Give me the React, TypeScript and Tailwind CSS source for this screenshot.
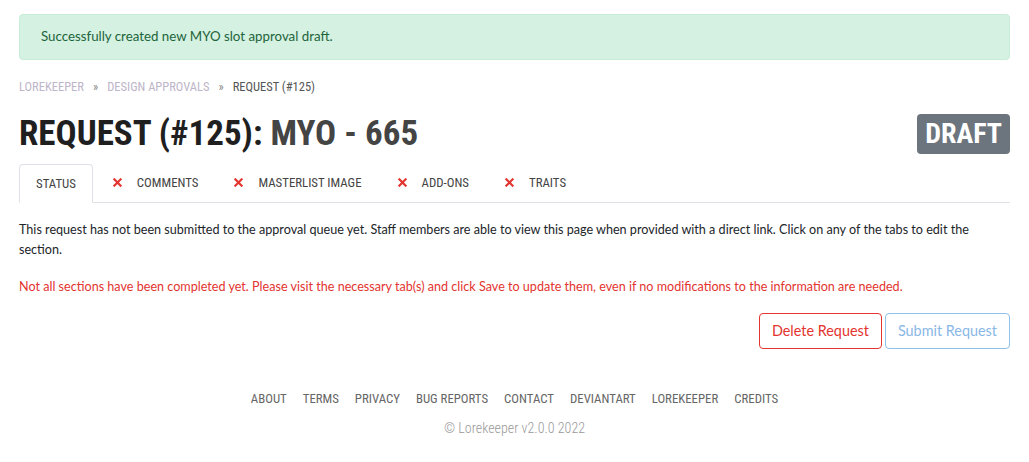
const heading = { fontFamily: '"Roboto Condensed", Roboto, sans-serif' }
const body = { fontFamily: 'Lato, "Open Sans", sans-serif' }

const tabs = ['Comments', 'Masterlist Image', 'Add-Ons', 'Traits']
const footerLinks = ['About', 'Terms', 'Privacy', 'Bug Reports', 'Contact', 'deviantART', 'Lorekeeper', 'Credits']

function CrossIcon() {
  return (
    <svg className="w-[9px] h-[9px] ml-[4px] mr-[15px]" viewBox="0 0 10 10" fill="none">
      <path d="M1.5 1.5l7 7M8.5 1.5l-7 7" stroke="#e3342f" strokeWidth="2.4" strokeLinecap="square" />
    </svg>
  )
}

export default function App() {
  return (
    <div className="bg-white min-h-screen px-[19px] pt-[14px] pb-6 text-[#212529]" style={body}>
      {/* Flash message */}
      <div className="h-[46px] flex items-center px-[21px] bg-[#d4f1e1] border border-[#c7ecd7] rounded text-[13.3px] text-[#1d643b]">
        Successfully created new MYO slot approval draft.
      </div>

      {/* Breadcrumb */}
      <div className="mt-[18px] flex items-center gap-[9px] text-[12.5px] uppercase" style={heading}>
        <span className="text-[#bdb5c9]">Lorekeeper</span>
        <span className="text-[#888]">»</span>
        <span className="text-[#bdb5c9]">Design Approvals</span>
        <span className="text-[#888]">»</span>
        <span className="text-[#555]">Request (#125)</span>
      </div>

      {/* Title */}
      <div className="mt-[17px] flex items-center justify-between">
        <h1 className="text-[35px] leading-[40px] font-bold uppercase text-[#1f1f1f]" style={heading}>
          Request (#125): <span className="text-[#444]">MYO - 665</span>
        </h1>
        <span className="h-[40px] px-[8px] flex items-center rounded bg-[#6c757d] text-white text-[28px] font-bold" style={heading}>
          DRAFT
        </span>
      </div>

      {/* Tabs */}
      <div className="mt-[10px] flex border-b border-[#dee2e6] text-[12.8px] uppercase text-[#444]" style={heading}>
        <div className="-mb-px h-[39px] px-4 flex items-center border border-[#dee2e6] border-b-white rounded-t bg-white">
          Status
        </div>
        {tabs.map(t => (
          <div key={t} className="h-[38px] px-4 flex items-center">
            <CrossIcon />
            {t}
          </div>
        ))}
      </div>

      {/* Status text */}
      <p className="mt-[17px] text-[12.6px] leading-[20px]">
        This request has not been submitted to the approval queue yet. Staff members are able to view this page when provided with a direct link. Click on any of the tabs to edit the section.
      </p>
      <p className="mt-[17px] text-[12.6px] leading-[20px] text-[#e3342f]">
        Not all sections have been completed yet. Please visit the necessary tab(s) and click Save to update them, even if no modifications to the information are needed.
      </p>

      <div className="mt-[16px] flex justify-end gap-[3px] text-[14.4px]">
        <button className="h-[36px] px-[12px] rounded border border-[#e3342f] text-[#e3342f]">Delete Request</button>
        <button className="h-[36px] px-[12px] rounded border border-[#8ec0ea] text-[#8ab8e6]" disabled>Submit Request</button>
      </div>

      {/* Footer */}
      <div className="mt-[40px] flex justify-center gap-4 text-[12.8px] uppercase text-[#666]" style={heading}>
        {footerLinks.map(l => (
          <span key={l}>{l}</span>
        ))}
      </div>
      <div className="mt-[10px] text-center text-[14px] font-light text-[#999]" style={heading}>
        © Lorekeeper v2.0.0 2022
      </div>
    </div>
  )
}
